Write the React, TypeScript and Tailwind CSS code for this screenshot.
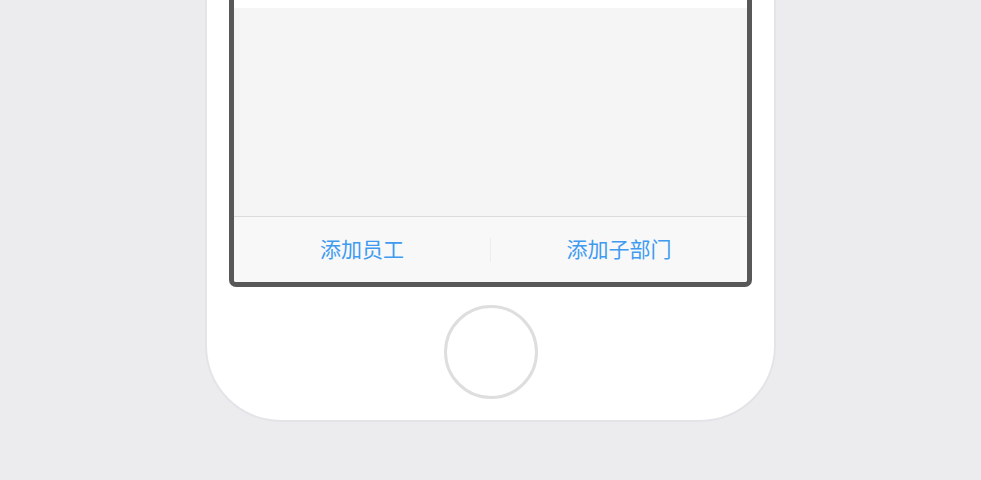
export default function App() {
  return (
    <div className="w-[981px] h-[480px] bg-[#ececee] flex justify-center overflow-hidden">
      {/* phone body */}
      <div className="w-[571px] h-[422px] bg-white border-x-2 border-b-2 border-[#e3e4e8] rounded-b-[76px] flex flex-col items-center">
        {/* screen frame */}
        <div className="w-[523px] h-[287px] border-x-[5px] border-b-[5px] border-[#585858] rounded-b-[7px] flex flex-col overflow-hidden">
          <div className="h-[8px] bg-white shrink-0" />
          <div className="flex-1 bg-[#f5f5f5]" />
          <div
            className="h-[66px] shrink-0 bg-[#f8f8f8] border-t border-[#dcdcdc] flex items-center text-[21px] leading-none text-[#3f9bf0]"
            style={{ fontFamily: '"Noto Sans CJK SC", "Noto Sans", sans-serif' }}
          >
            <button className="flex-1 h-full flex items-center justify-center pb-[2px]">添加员工</button>
            <div className="w-px h-[24px] bg-[#ececec]" />
            <button className="flex-1 h-full flex items-center justify-center pb-[2px]">添加子部门</button>
          </div>
        </div>
        {/* home button */}
        <div className="mt-[18px] w-[94px] h-[94px] rounded-full border-[3px] border-[#dedede]" />
      </div>
    </div>
  );
}
